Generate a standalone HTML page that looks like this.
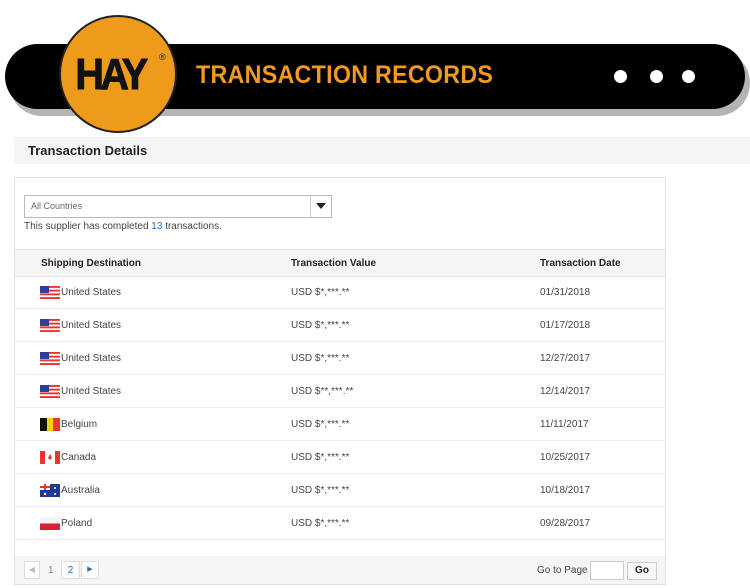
<!DOCTYPE html>
<html><head><style>
*{margin:0;padding:0;box-sizing:border-box}
body{width:750px;height:588px;background:#fff;font-family:"Liberation Sans",sans-serif;position:relative;overflow:hidden;color:#333}
.abs{position:absolute}
.row{position:absolute;left:15px;width:650px;height:33px;border-bottom:1px solid #eee;font-size:10px;color:#444}
.row span{position:absolute;top:11px}
.flag{position:absolute;left:25px;top:10px;width:20px;height:13px}
</style></head><body>
<!-- banner -->
<div class="abs" style="left:9px;top:50px;width:741px;height:66px;background:#b4b4b4;border-radius:33px"></div>
<div class="abs" style="left:5px;top:44px;width:740px;height:65px;background:#000;border-radius:33px"></div>
<div class="abs" style="left:59px;top:15px;width:118px;height:118px;border-radius:50%;background:#ee9a1a;border:2px solid #222"></div>
<div class="abs" style="left:60px;top:50px;width:100px;text-align:center;font:bold 44px 'Liberation Sans',sans-serif;color:#111;letter-spacing:-4px;transform:scaleX(0.9);-webkit-text-stroke:1px #111">HAY</div>
<div class="abs" style="left:159px;top:52px;font-size:9px;color:#222">®</div>
<div class="abs" style="left:196px;top:61px;font:bold 25px 'Liberation Sans',sans-serif;color:#f29a1e;letter-spacing:0.3px;transform:scaleX(0.93);transform-origin:left">TRANSACTION RECORDS</div>
<div class="abs" style="left:614px;top:70px;width:13px;height:13px;border-radius:50%;background:#fff"></div>
<div class="abs" style="left:650px;top:70px;width:13px;height:13px;border-radius:50%;background:#fff"></div>
<div class="abs" style="left:682px;top:70px;width:13px;height:13px;border-radius:50%;background:#fff"></div>
<!-- details -->
<div class="abs" style="left:14px;top:137px;width:736px;height:27px;background:#f5f5f5"></div>
<div class="abs" style="left:28px;top:143px;font-size:13px;font-weight:bold;color:#222">Transaction Details</div>
<div class="abs" style="left:14px;top:177px;width:652px;height:408px;border:1px solid #e2e2e2"></div>
<div class="abs" style="left:24px;top:195px;width:308px;height:23px;border:1px solid #bbb"></div>
<div class="abs" style="left:310px;top:196px;width:1px;height:21px;background:#ccc"></div>
<div class="abs" style="left:316px;top:203px;width:0;height:0;border-left:5px solid transparent;border-right:5px solid transparent;border-top:6px solid #222"></div>
<div class="abs" style="left:31px;top:201px;font-size:9px;color:#666">All Countries</div>
<div class="abs" style="left:24px;top:221px;font-size:10px;color:#444">This supplier has completed <span style="color:#2a6ab8">13</span> transactions.</div>
<div class="abs" style="left:15px;top:249px;width:650px;height:28px;background:#f5f5f5;border-top:1px solid #e4e4e4;border-bottom:1px solid #e4e4e4;font-size:10px;font-weight:bold;color:#222">
<span class="abs" style="left:26px;top:8px">Shipping Destination</span><span class="abs" style="left:276px;top:8px">Transaction Value</span><span class="abs" style="left:525px;top:8px">Transaction Date</span></div>

<div class="row" style="top:276px"><svg class="flag" viewBox="0 0 20 13"><rect width="20" height="13" fill="#fff"/><g fill="#e33"><rect y="0" width="20" height="1.9"/><rect y="3.7" width="20" height="1.9"/><rect y="7.4" width="20" height="1.9"/><rect y="11.1" width="20" height="1.9"/></g><rect width="9" height="7" fill="#2b3f9e"/></svg><span style="left:46px">United States</span><span style="left:276px">USD $*,***.**</span><span style="left:525px">01/31/2018</span></div>
<div class="row" style="top:309px"><svg class="flag" viewBox="0 0 20 13"><rect width="20" height="13" fill="#fff"/><g fill="#e33"><rect y="0" width="20" height="1.9"/><rect y="3.7" width="20" height="1.9"/><rect y="7.4" width="20" height="1.9"/><rect y="11.1" width="20" height="1.9"/></g><rect width="9" height="7" fill="#2b3f9e"/></svg><span style="left:46px">United States</span><span style="left:276px">USD $*,***.**</span><span style="left:525px">01/17/2018</span></div>
<div class="row" style="top:342px"><svg class="flag" viewBox="0 0 20 13"><rect width="20" height="13" fill="#fff"/><g fill="#e33"><rect y="0" width="20" height="1.9"/><rect y="3.7" width="20" height="1.9"/><rect y="7.4" width="20" height="1.9"/><rect y="11.1" width="20" height="1.9"/></g><rect width="9" height="7" fill="#2b3f9e"/></svg><span style="left:46px">United States</span><span style="left:276px">USD $*,***.**</span><span style="left:525px">12/27/2017</span></div>
<div class="row" style="top:375px"><svg class="flag" viewBox="0 0 20 13"><rect width="20" height="13" fill="#fff"/><g fill="#e33"><rect y="0" width="20" height="1.9"/><rect y="3.7" width="20" height="1.9"/><rect y="7.4" width="20" height="1.9"/><rect y="11.1" width="20" height="1.9"/></g><rect width="9" height="7" fill="#2b3f9e"/></svg><span style="left:46px">United States</span><span style="left:276px">USD $**,***.**</span><span style="left:525px">12/14/2017</span></div>
<div class="row" style="top:408px"><svg class="flag" viewBox="0 0 20 13"><rect width="7" height="13" fill="#111"/><rect x="7" width="6" height="13" fill="#f5d20f"/><rect x="13" width="7" height="13" fill="#e33"/></svg><span style="left:46px">Belgium</span><span style="left:276px">USD $*,***.**</span><span style="left:525px">11/11/2017</span></div>
<div class="row" style="top:441px"><svg class="flag" viewBox="0 0 20 13"><rect width="20" height="13" fill="#fff"/><rect width="5" height="13" fill="#e33"/><rect x="15" width="5" height="13" fill="#e33"/><path d="M10 3 L12 7 L10 9 L8 7Z" fill="#e33"/></svg><span style="left:46px">Canada</span><span style="left:276px">USD $*,***.**</span><span style="left:525px">10/25/2017</span></div>
<div class="row" style="top:474px"><svg class="flag" viewBox="0 0 20 13"><rect width="20" height="13" fill="#1f3a93"/><rect width="10" height="6" fill="#fff"/><rect x="4" width="2" height="6" fill="#e33"/><rect y="2" width="10" height="2" fill="#e33"/><circle cx="5" cy="10" r="1.2" fill="#fff"/><circle cx="15" cy="4" r="1" fill="#fff"/><circle cx="15" cy="10" r="1" fill="#fff"/></svg><span style="left:46px">Australia</span><span style="left:276px">USD $*,***.**</span><span style="left:525px">10/18/2017</span></div>
<div class="row" style="top:507px"><svg class="flag" viewBox="0 0 20 13"><rect width="20" height="6.5" fill="#f4f4f4"/><rect y="6.5" width="20" height="6.5" fill="#d8203a"/></svg><span style="left:46px">Poland</span><span style="left:276px">USD $*,***.**</span><span style="left:525px">09/28/2017</span></div>

<div class="abs" style="left:15px;top:556px;width:650px;height:28px;background:#f5f5f5"></div>
<div class="abs" style="left:24px;top:561px;width:16px;height:18px;border:1px solid #ddd;background:#fff;font-size:8px;color:#bbb;text-align:center;line-height:16px">◀</div>
<div class="abs" style="left:48px;top:565px;font-size:10px;color:#888">1</div>
<div class="abs" style="left:61px;top:561px;width:19px;height:18px;border:1px solid #ddd;background:#fff;font-size:10px;color:#2a6ab8;text-align:center;line-height:17px">2</div>
<div class="abs" style="left:81px;top:561px;width:18px;height:18px;border:1px solid #ddd;background:#fff;font-size:7px;color:#2a6ab8;text-align:center;line-height:16px">▶</div>
<div class="abs" style="left:537px;top:565px;font-size:10px;color:#444">Go to Page</div>
<div class="abs" style="left:590px;top:561px;width:34px;height:19px;border:1px solid #ccc;background:#fff"></div>
<div class="abs" style="left:627px;top:562px;width:30px;height:18px;border:1px solid #ccc;background:#f8f8f8;font-size:10px;font-weight:bold;text-align:center;line-height:16px;color:#222">Go</div>
</body></html>
